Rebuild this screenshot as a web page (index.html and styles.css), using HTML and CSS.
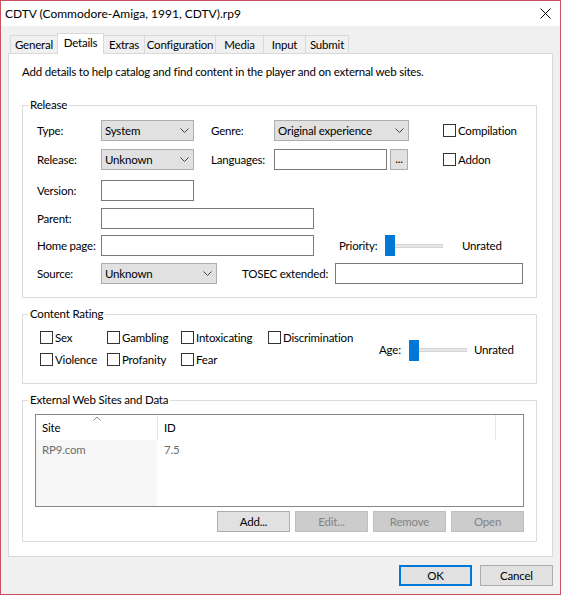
FILE: index.html
```html
<!DOCTYPE html>
<html>
<head>
<meta charset="utf-8">
<title>CDTV (Commodore-Amiga, 1991, CDTV).rp9</title>
<link rel="stylesheet" href="styles.css">
</head>
<body>
<div class="window">
  <div class="titlebar">
    <span class="title">CDTV (Commodore-Amiga, 1991, CDTV).rp9</span>
    <svg class="close" width="11" height="11" viewBox="0 0 11 11"><path d="M0.5 0.5L10.5 10.5M10.5 0.5L0.5 10.5" stroke="#000" stroke-width="1" fill="none"/></svg>
  </div>
  <div class="client">
    <div class="tabs">
      <div class="tab t-general">General</div>
      <div class="tab active t-details">Details</div>
      <div class="tab t-extras">Extras</div>
      <div class="tab t-config">Configuration</div>
      <div class="tab t-media">Media</div>
      <div class="tab t-input">Input</div>
      <div class="tab last t-submit">Submit</div>
    </div>
    <div class="panel">
      <p class="desc">Add details to help catalog and find content in the player and on external web sites.</p>

      <fieldset class="group release">
        <legend>Release</legend>
        <div class="release-body">
          <div class="row">
            <span class="lbl c1">Type:</span>
            <div class="combo w93"><span class="ctext">System</span><svg class="chev" width="9" height="5" viewBox="0 0 9 5"><polyline points="0.5,0.5 4.5,4.5 8.5,0.5" fill="none" stroke="#444" stroke-width="1"/></svg></div>
            <span class="lbl c2">Genre:</span>
            <div class="combo w135"><span class="ctext">Original experience</span><svg class="chev" width="9" height="5" viewBox="0 0 9 5"><polyline points="0.5,0.5 4.5,4.5 8.5,0.5" fill="none" stroke="#444" stroke-width="1"/></svg></div>
            <label class="check ml34"><span class="box"></span>Compilation</label>
          </div>
          <div class="row r2">
            <span class="lbl c1">Release:</span>
            <div class="combo w93"><span class="ctext">Unknown</span><svg class="chev" width="9" height="5" viewBox="0 0 9 5"><polyline points="0.5,0.5 4.5,4.5 8.5,0.5" fill="none" stroke="#444" stroke-width="1"/></svg></div>
            <span class="lbl c2">Languages:</span>
            <div class="input w113"></div>
            <div class="btn dots">...</div>
            <label class="check ml35"><span class="box"></span>Addon</label>
          </div>
          <div class="row r3">
            <span class="lbl c1">Version:</span>
            <div class="input w93"></div>
          </div>
          <div class="row r4">
            <span class="lbl c1">Parent:</span>
            <div class="input w213"></div>
          </div>
          <div class="row r5">
            <span class="lbl c1">Home page:</span>
            <div class="input w213"></div>
            <span class="lbl prio">Priority:</span>
            <div class="slider"><span class="thumb"></span><span class="track"></span></div>
            <span class="lbl unrated1">Unrated</span>
          </div>
          <div class="row r6">
            <span class="lbl c1">Source:</span>
            <div class="combo w116"><span class="ctext">Unknown</span><svg class="chev" width="9" height="5" viewBox="0 0 9 5"><polyline points="0.5,0.5 4.5,4.5 8.5,0.5" fill="none" stroke="#444" stroke-width="1"/></svg></div>
            <span class="lbl tosec">TOSEC extended:</span>
            <div class="input w188"></div>
          </div>
        </div>
      </fieldset>

      <fieldset class="group rating">
        <legend>Content Rating</legend>
        <div class="rating-body">
          <div class="cr-grid">
            <label class="check"><span class="box"></span>Sex</label>
            <label class="check"><span class="box"></span>Gambling</label>
            <label class="check"><span class="box"></span>Intoxicating</label>
            <label class="check"><span class="box"></span>Discrimination</label>
            <label class="check"><span class="box"></span>Violence</label>
            <label class="check"><span class="box"></span>Profanity</label>
            <label class="check"><span class="box"></span>Fear</label>
          </div>
          <div class="age">
            <span class="lbl agelbl">Age:</span>
            <div class="slider"><span class="thumb"></span><span class="track"></span></div>
            <span class="lbl unrated2">Unrated</span>
          </div>
        </div>
      </fieldset>

      <fieldset class="group external">
        <legend>External Web Sites and Data</legend>
        <div class="external-body">
          <div class="list">
            <div class="lhead">
              <div class="hc site">Site<svg class="sort" width="8" height="5" viewBox="0 0 8 5"><polyline points="0.5,4.5 4,1 7.5,4.5" fill="none" stroke="#8a8a8a" stroke-width="1"/></svg></div>
              <div class="hc id">ID</div>
            </div>
            <div class="lbody">
              <div class="col1"><div class="cell">RP9.com</div></div>
              <div class="col2"><div class="cell">7.5</div></div>
            </div>
          </div>
          <div class="btns">
            <div class="btn">Add...</div>
            <div class="btn disabled">Edit...</div>
            <div class="btn disabled">Remove</div>
            <div class="btn disabled">Open</div>
          </div>
        </div>
      </fieldset>
    </div>
    <div class="footer">
      <div class="btn default">OK</div>
      <div class="btn">Cancel</div>
    </div>
  </div>
</div>
</body>
</html>
```
FILE: styles.css
```css
* { box-sizing: border-box; }
html, body { margin: 0; padding: 0; }
body {
  font-family: Lato, "Noto Sans", sans-serif;
  font-size: 11.5px;
  letter-spacing: -0.2px;
  line-height: 16px;
  color: #000;
  background: #fff;
}
.window {
  width: 561px;
  height: 595px;
  border: 1px solid #c8525d;
  background: #f0f0f0;
  display: flex;
  flex-direction: column;
}
.titlebar {
  flex: none;
  height: 25px;
  background: #fff;
  display: flex;
  align-items: center;
  padding-left: 4px;
}
.title { font-size: 12px; letter-spacing: 0; }
.close { margin-left: auto; margin-right: 9px; }

.client {
  flex: 1;
  min-height: 0;
  display: flex;
  flex-direction: column;
  padding: 7px 7px 8px 7px;
}
.tabs {
  flex: none;
  height: 20px;
  display: flex;
  align-items: flex-end;
  padding-left: 2px;
}
.tab {
  height: 18px;
  line-height: 17px;
  text-align: center;
  background: #f0f0f0;
  border: 1px solid #d9d9d9;
  border-right: none;
  border-bottom: none;
  white-space: nowrap;
}
.tab.last { border-right: 1px solid #d9d9d9; }
.tab.active {
  height: 21px;
  line-height: 18px;
  margin-bottom: -1px;
  margin-right: -1px;
  background: #fff;
  border-right: 1px solid #d9d9d9;
  position: relative;
  z-index: 1;
}
.t-general { width: 47px; }
.t-details { width: 47px; }
.t-extras { width: 41px; }
.t-config { width: 71px; }
.t-media { width: 48px; }
.t-input { width: 42px; }
.t-submit { width: 44px; }

.panel {
  flex: 1;
  min-height: 0;
  background: #fff;
  border: 1px solid #d9d9d9;
  padding: 10px 15px 0 13px;
  display: flex;
  flex-direction: column;
}
.desc { margin: 0; }

.group {
  margin: 0;
  padding: 0;
  min-width: 0;
  border: 1px solid #dcdcdc;
}
.group legend {
  margin-left: 5px;
  padding: 0 2px;
  line-height: 16px;
}
.release { margin-top: 17px; }
.rating { margin-top: 8px; }
.external { margin-top: 8px; }

.release-body { padding: 7px 0 13px 14px; }
.row {
  display: flex;
  align-items: center;
  height: 21px;
}
.r2 { margin-top: 8px; }
.r3 { margin-top: 10px; }
.r4 { margin-top: 7px; }
.r5 { margin-top: 6px; }
.r6 { margin-top: 7px; }

.lbl { flex: none; white-space: nowrap; }
.c1 { width: 64px; }
.c2 { width: 63px; margin-left: 17px; }
.prio { width: 46px; margin-left: 25px; }
.unrated1 { margin-left: 19px; }
.tosec { width: 93px; margin-left: 25px; }

.combo {
  flex: none;
  height: 21px;
  background: #e1e1e1;
  border: 1px solid #adadad;
  display: flex;
  align-items: center;
  padding-left: 3px;
}
.ctext { flex: 1; white-space: nowrap; }
.chev { margin-right: 4px; }
.input {
  flex: none;
  height: 21px;
  background: #fff;
  border: 1px solid #7a7a7a;
}
.w93 { width: 93px; }
.w113 { width: 113px; }
.w116 { width: 116px; }
.w135 { width: 135px; }
.w188 { width: 188px; }
.w213 { width: 213px; }

.check {
  display: flex;
  align-items: center;
  height: 13px;
  line-height: 13px;
  white-space: nowrap;
}
.box {
  flex: none;
  width: 13px;
  height: 13px;
  border: 1px solid #333;
  background: #fff;
  margin-right: 2px;
}
.ml34 { margin-left: 34px; }
.ml35 { margin-left: 35px; }

.slider {
  flex: none;
  width: 58px;
  height: 21px;
  display: flex;
  align-items: center;
}
.thumb {
  flex: none;
  width: 10px;
  height: 21px;
  background: #0078d7;
}
.track {
  flex: 1;
  height: 4px;
  background: #e7e7e7;
  border: 1px solid #d6d6d6;
  border-left: none;
}

.rating-body {
  padding: 9px 0 17px 17px;
  display: flex;
  align-items: center;
}
.cr-grid {
  display: grid;
  grid-template-columns: 67px 74px 87px 111px;
  grid-auto-rows: 13px;
  row-gap: 9px;
}
.age {
  display: flex;
  align-items: center;
  padding-top: 3px;
}
.agelbl { width: 30px; }
.unrated2 { margin-left: 7px; }

.external-body { padding: 6px 12px 9px 12px; }
.list {
  height: 93px;
  border: 1px solid #828790;
  background: #fff;
  display: flex;
  flex-direction: column;
}
.lhead { flex: none; display: flex; height: 25px; }
.hc {
  position: relative;
  padding-left: 6px;
  line-height: 25px;
  border-right: 1px solid #e5e5e5;
}
.hc.site { width: 122px; }
.hc.id { width: 338px; }
.sort { position: absolute; left: 57px; top: 1px; }
.lbody { flex: 1; display: flex; }
.col1 { width: 121px; background: #f7f7f7; }
.col2 { flex: 1; padding-left: 1px; }
.cell {
  padding: 1px 0 0 6px;
  line-height: 17px;
  color: #6d6d6d;
}

.btns {
  display: flex;
  justify-content: flex-end;
  gap: 5px;
  margin-top: 4px;
}
.btn {
  flex: none;
  width: 73px;
  height: 21px;
  line-height: 19px;
  text-align: center;
  background: #e1e1e1;
  border: 1px solid #adadad;
}
.btn.disabled {
  background: #cccccc;
  border-color: #bfbfbf;
  color: #838383;
}
.btn.dots {
  width: 18px;
  margin-left: 3px;
  line-height: 17px;
}
.footer {
  flex: none;
  display: flex;
  justify-content: flex-end;
  gap: 8px;
  margin-top: 8px;
}
.btn.default {
  border: 2px solid #0078d7;
  line-height: 17px;
}
```
